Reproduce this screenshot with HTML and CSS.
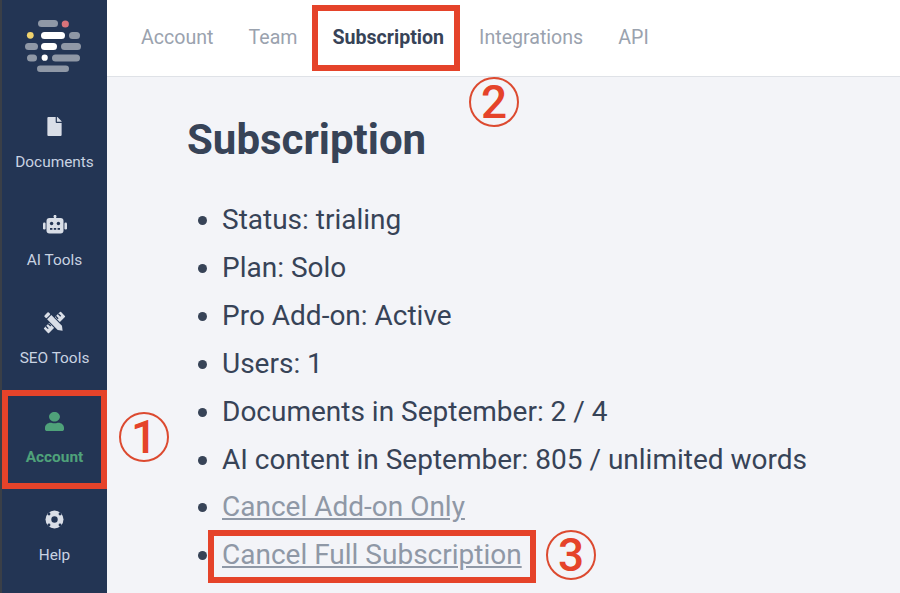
FILE: index.html
```html
<!DOCTYPE html>
<html lang="en">
<head>
    <meta charset="UTF-8">
    <meta name="viewport" content="width=device-width, initial-scale=1.0">
    <title>Subscription</title>
    <link rel="stylesheet" href="styles.css">
</head>
<body>
    <div class="app">
        <aside class="sidebar">
            <svg class="logo" viewBox="0 0 60 50" width="60" height="50">
                <rect class="logo-grey" x="13" y="0" width="20" height="7" rx="3.5"/>
                <circle cx="40.3" cy="4" r="3.6" fill="#d9737a"/>
                <circle cx="5.3" cy="15.3" r="3.4" fill="#f0d36e"/>
                <rect class="logo-white" x="16" y="12" width="24" height="7" rx="3.5"/>
                <rect class="logo-grey" x="44" y="12" width="11" height="7" rx="3.5"/>
                <rect class="logo-grey" x="0" y="23" width="13" height="7" rx="3.5"/>
                <rect class="logo-white" x="16" y="23" width="16" height="7" rx="3.5"/>
                <rect class="logo-grey" x="36" y="23" width="20" height="7" rx="3.5"/>
                <rect class="logo-grey" x="2" y="34.5" width="10" height="7" rx="3.5"/>
                <circle cx="19.7" cy="37.7" r="3.1" fill="#fff"/>
                <rect class="logo-grey" x="27" y="34.5" width="28" height="7" rx="3.5"/>
                <rect class="logo-grey" x="12" y="45.5" width="32" height="6.5" rx="3.25"/>
            </svg>
            <nav class="nav">
                <a class="nav-item">
                    <svg class="nav-icon" viewBox="0 0 384 512" width="15" height="19"><path d="M224 136V0H24C10.7 0 0 10.7 0 24v464c0 13.3 10.7 24 24 24h336c13.3 0 24-10.7 24-24V160H248c-13.2 0-24-10.8-24-24zm160-14.1v6.1H256V0h6.1c6.4 0 12.5 2.5 17 7l97.9 98c4.5 4.5 7 10.6 7 16.9z"/></svg>
                    <span>Documents</span>
                </a>
                <a class="nav-item">
                    <svg class="nav-icon" viewBox="0 0 24 19" width="24" height="19">
                        <rect x="10.9" y="0" width="2.2" height="4"/>
                        <circle cx="12" cy="1.4" r="1.4"/>
                        <rect x="3.5" y="3" width="17" height="15.5" rx="3"/>
                        <rect x="0" y="7.5" width="2.6" height="7" rx="1.2"/>
                        <rect x="21.4" y="7.5" width="2.6" height="7" rx="1.2"/>
                        <circle class="cut" cx="8.6" cy="8.5" r="1.7"/>
                        <circle class="cut" cx="15.4" cy="8.5" r="1.7"/>
                        <rect class="cut" x="7" y="13" width="2.4" height="1.8"/>
                        <rect class="cut" x="10.8" y="13" width="2.4" height="1.8"/>
                        <rect class="cut" x="14.6" y="13" width="2.4" height="1.8"/>
                    </svg>
                    <span>AI Tools</span>
                </a>
                <a class="nav-item">
                    <svg class="nav-icon" viewBox="0 0 19 19" width="19" height="19">
                        <g transform="rotate(45 9.5 9.5)">
                            <rect x="6" y="-2.5" width="7" height="24" rx="0.8"/>
                            <path class="cut" d="M6 0h3.4v1.3H6zM6 3.6h3.4v1.3H6zM6 14h3.4v1.3H6zM6 17.6h3.4v1.3H6z"/>
                        </g>
                        <g transform="rotate(-45 9.5 9.5)">
                            <rect class="cut" x="5.4" y="-2" width="8.2" height="23"/>
                            <path d="M6.5 2h6v15l-3 4-3-4z"/>
                            <rect x="6.5" y="-2.5" width="6" height="3.4" rx="1"/>
                        </g>
                    </svg>
                    <span>SEO Tools</span>
                </a>
                <a class="nav-item nav-item-active">
                    <svg class="nav-icon" viewBox="0 0 448 512" width="19" height="19" preserveAspectRatio="none"><path d="M224 256c70.7 0 128-57.3 128-128S294.7 0 224 0 96 57.3 96 128s57.3 128 128 128zm89.6 32h-16.7c-22.2 10.2-46.9 16-72.9 16s-50.6-5.8-72.9-16h-16.7C60.2 288 0 348.2 0 422.4V464c0 26.5 21.5 48 48 48h352c26.5 0 48-21.5 48-48v-41.6c0-74.2-60.2-134.4-134.4-134.4z"/></svg>
                    <span>Account</span>
                </a>
                <a class="nav-item">
                    <svg class="nav-icon" viewBox="0 0 19 19" width="19" height="19">
                        <circle cx="9.5" cy="9.5" r="9"/>
                        <circle class="cut" cx="9.5" cy="9.5" r="3.2"/>
                        <circle class="cut" cx="4" cy="4" r="1.4"/>
                        <circle class="cut" cx="15" cy="4" r="1.4"/>
                        <circle class="cut" cx="4" cy="15" r="1.4"/>
                        <circle class="cut" cx="15" cy="15" r="1.4"/>
                    </svg>
                    <span>Help</span>
                </a>
            </nav>
        </aside>
        <div class="main">
            <header class="tabs">
                <a class="tab">Account</a>
                <a class="tab">Team</a>
                <a class="tab tab-active">Subscription</a>
                <a class="tab">Integrations</a>
                <a class="tab">API</a>
            </header>
            <section class="content">
                <h1 class="title">Subscription</h1>
                <ul class="details">
                    <li>Status: trialing</li>
                    <li>Plan: Solo</li>
                    <li>Pro Add-on: Active</li>
                    <li>Users: 1</li>
                    <li>Documents in September: 2 / 4</li>
                    <li>AI content in September: 805 / unlimited words</li>
                    <li><a class="cancel-link">Cancel Add-on Only</a></li>
                    <li><a class="cancel-link">Cancel Full Subscription</a></li>
                </ul>
            </section>
        </div>
    </div>

    <!-- red annotations on top of the screenshot -->
    <div class="mark mark-account"></div>
    <div class="mark mark-tab"></div>
    <div class="mark mark-cancel"></div>
    <div class="step step-1">1</div>
    <div class="step step-2">2</div>
    <div class="step step-3">3</div>
</body>
</html>
```

FILE: styles.css
```css
* {
    box-sizing: border-box;
    margin: 0;
    padding: 0;
}

body {
    font-family: Roboto, 'Liberation Sans', sans-serif;
    background: #f3f4f8;
    color: #374357;
    height: 593px;
    overflow: hidden;
    position: relative;
}

.app {
    display: flex;
    height: 593px;
}

.sidebar {
    width: 107px;
    flex-shrink: 0;
    background: #233554;
    border-left: 2px solid #3a3f47;
    display: flex;
    flex-direction: column;
    align-items: center;
    padding-top: 20px;
}

.logo {
    margin-left: 1px;
    overflow: visible;
}

.logo-grey {
    fill: #8f98a6;
}

.logo-white {
    fill: #fff;
}

.nav {
    margin-top: 47px;
    width: 100%;
    display: flex;
    flex-direction: column;
}

.nav-item {
    height: 98.2px;
    display: flex;
    flex-direction: column;
    align-items: center;
    color: #c9d3e2;
    font-size: 15.4px;
}

.nav-icon {
    height: 19px;
    fill: #d9dee7;
    margin-bottom: 17px;
    overflow: visible;
}

.nav-icon .cut {
    fill: #233554;
}

.nav-item-active {
    color: #4fa27a;
    font-weight: 700;
}

.nav-item-active .nav-icon {
    fill: #4fa27a;
}

.main {
    flex: 1;
}

.tabs {
    height: 77px;
    background: #fff;
    border-bottom: 1px solid #dfe2e7;
    display: flex;
    align-items: center;
    gap: 35px;
    padding-left: 34px;
    padding-bottom: 2px;
    font-size: 19.6px;
    color: #9aa2ae;
}

.tab-active {
    color: #374357;
    font-weight: 700;
}

.content {
    padding: 40px 0 0 80px;
}

.title {
    font-size: 42px;
    line-height: 46px;
    font-weight: 700;
}

.details {
    margin-top: 33px;
    padding-left: 35px;
    font-size: 28px;
    line-height: 47.9px;
}

.cancel-link {
    color: #8f98a6;
    text-decoration: underline;
}

.mark {
    position: absolute;
    border: 6px solid #e5432a;
}

.mark-account {
    left: 2px;
    top: 390px;
    width: 105px;
    height: 99px;
}

.mark-tab {
    left: 312px;
    top: 5px;
    width: 148px;
    height: 66px;
}

.mark-cancel {
    left: 208px;
    top: 530px;
    width: 328px;
    height: 53px;
}

.step {
    position: absolute;
    width: 50px;
    height: 50px;
    border: 2px solid #dc4a30;
    border-radius: 50%;
    color: #e5432a;
    font-size: 46px;
    font-weight: 500;
    line-height: 46px;
    text-align: center;
}

.step-1 {
    left: 119px;
    top: 412px;
}

.step-2 {
    left: 469px;
    top: 77px;
}

.step-3 {
    left: 546px;
    top: 530px;
}
```
